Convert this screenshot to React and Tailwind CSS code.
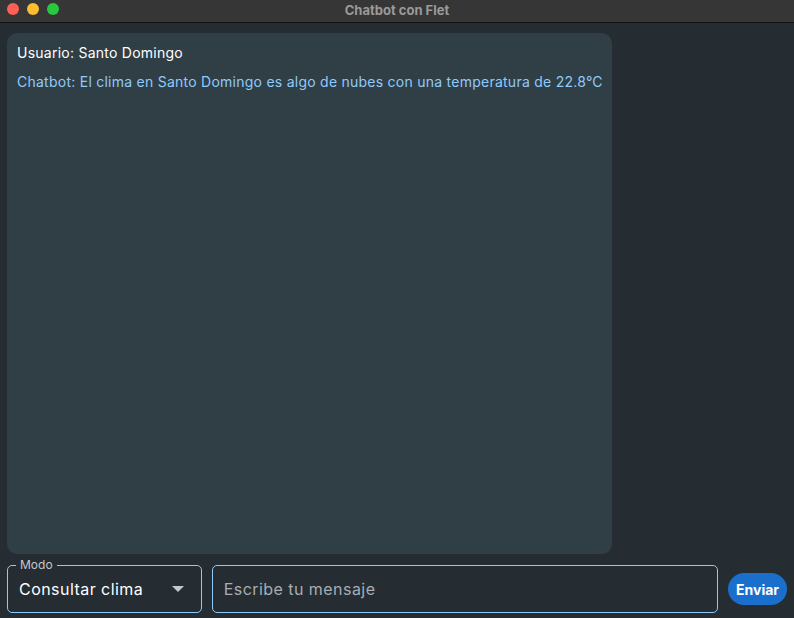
import React from 'react';

const TitleBar = () => (
  <div className="relative h-[23px] bg-[#363636] border-b border-[#121212] flex items-center justify-center">
    <div className="absolute left-[7px] top-[3px] flex gap-[8px]">
      <span className="h-[12px] w-[12px] rounded-full bg-[#fe5f57]"></span>
      <span className="h-[12px] w-[12px] rounded-full bg-[#febc2e]"></span>
      <span className="h-[12px] w-[12px] rounded-full bg-[#28c840]"></span>
    </div>
    <span className="text-[13px] font-bold text-[#9a9a9a]">Chatbot con Flet</span>
  </div>
);

const App = () => {
  return (
    <div className="w-[794px] h-[618px] bg-[#252c32] flex flex-col overflow-hidden" style={{ fontFamily: 'Inter, "Noto Sans", sans-serif' }}>
      <TitleBar />
      <div className="flex-1 flex flex-col px-[7px] pt-[10px] pb-[5px] gap-[11px]">
        {/* Chat history */}
        <div className="flex-1 w-[605px] rounded-[10px] bg-[#303e46] pl-[10px] pt-[10px] space-y-[10px] tracking-[0.25px] whitespace-nowrap">
          <p className="text-[14px] leading-[19px] text-white">Usuario: Santo Domingo</p>
          <p className="text-[14px] leading-[19px] text-[#90caf9]">
            Chatbot: El clima en Santo Domingo es algo de nubes con una temperatura de 22.8°C
          </p>
        </div>

        {/* Input row */}
        <div className="flex items-center gap-[10px] h-[48px]">
          <div className="relative w-[195px] h-[48px] rounded-[5px] border border-[#90caf9] flex items-center px-[11px] justify-between">
            <span className="absolute -top-[8px] left-[8px] bg-[#252c32] px-[4px] text-[12px] leading-[14px] text-[#c4c8cc]">Modo</span>
            <span className="text-[16px] text-white tracking-[0.45px]">Consultar clima</span>
            <svg width="12" height="6" viewBox="0 0 12 6" className="mr-[6px]">
              <path d="M0 0 L12 0 L6 6 Z" fill="#c4c8cc" />
            </svg>
          </div>
          <div className="w-[507px] h-[48px] rounded-[5px] border border-[#90caf9] flex items-center px-[11px]">
            <span className="text-[16px] text-[#a8adb2] tracking-[0.45px]">Escribe tu mensaje</span>
          </div>
          <button className="h-[32px] px-[8px] rounded-full bg-[#1a6fcc] text-white text-[14px] font-bold">
            Enviar
          </button>
        </div>
      </div>
    </div>
  );
};

export default App;
